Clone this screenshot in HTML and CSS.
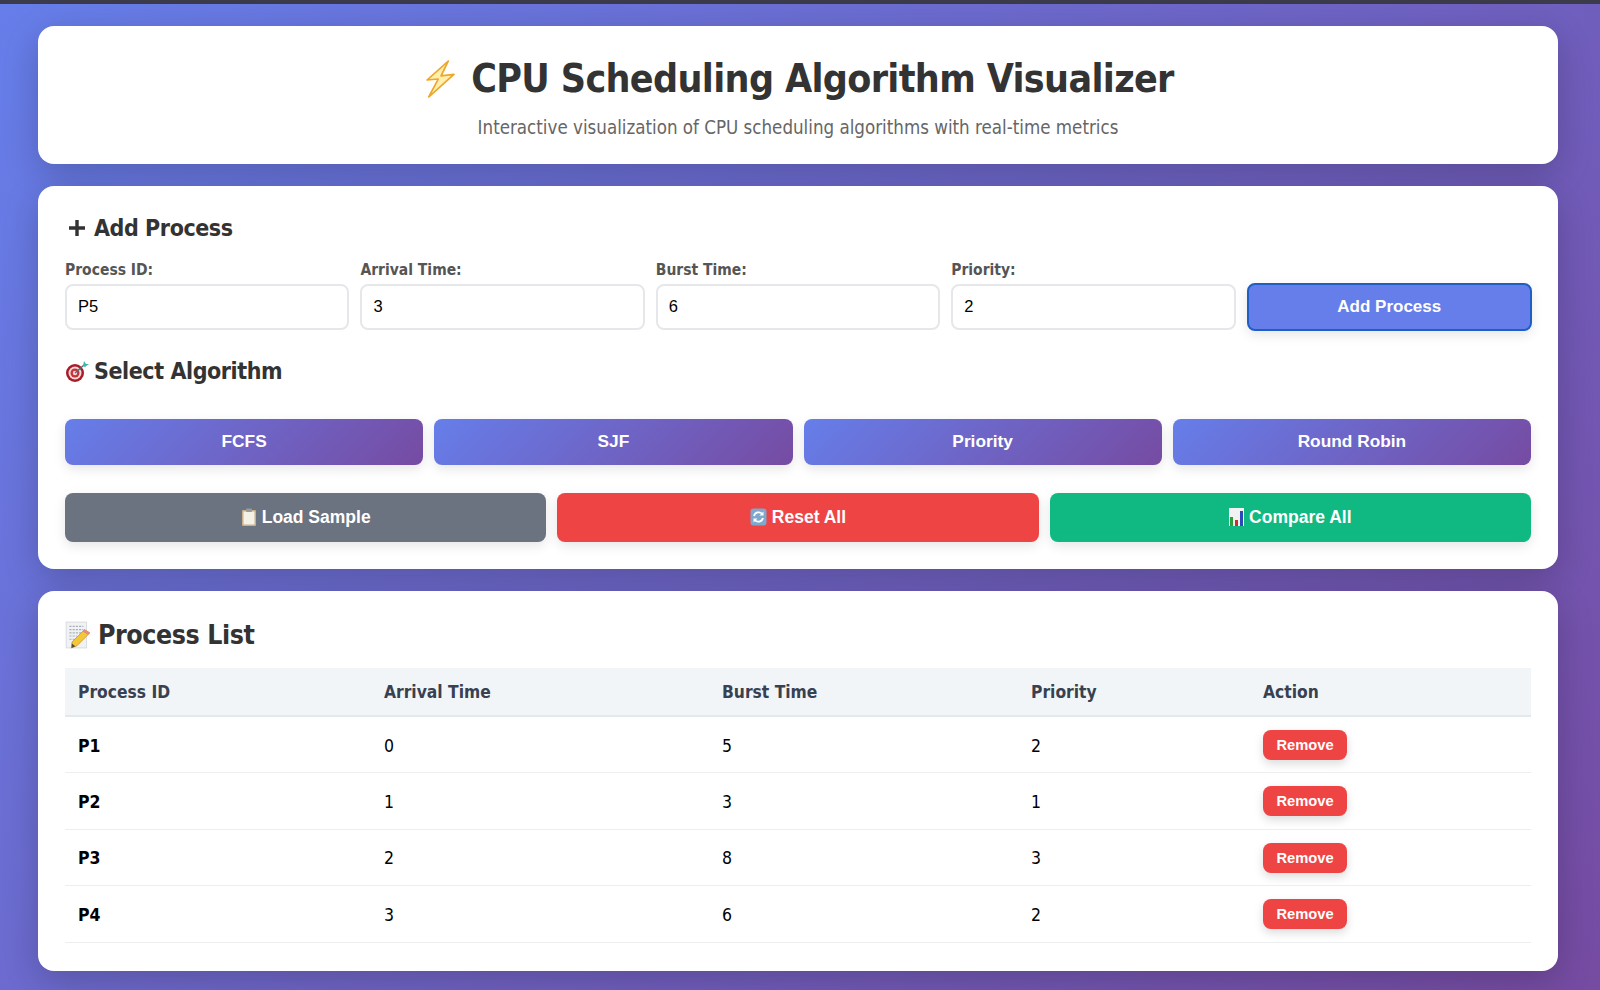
FILE: index.html
```html
<!DOCTYPE html>
<html lang="en">
<head>
  <meta charset="UTF-8">
  <meta name="viewport" content="width=device-width, initial-scale=1.0">
  <title>CPU Scheduling Algorithm Visualizer</title>
  <link rel="stylesheet" href="styles.css">
</head>
<body>

<div class="top-strip"></div>

<div class="container">
  <header class="card page-header">
    <h1>
      <svg class="bolt" width="29" height="38" viewBox="0 0 26 37" preserveAspectRatio="none">
        <path d="M20 1 L1 19.500 L11 18.500 L2.500 36 L25 14 L13.500 15.500 Z" fill="#fff0b0" stroke="#f0a62a" stroke-width="1.600" stroke-linejoin="round"/>
      </svg>
      <span>CPU Scheduling Algorithm Visualizer</span>
    </h1>
    <p>Interactive visualization of CPU scheduling algorithms with real-time metrics</p>
  </header>

  <section class="card controls">
    <h2 class="add-title">
      <svg width="18" height="18" viewBox="0 0 18 18"><path d="M9 1 V17 M1 9 H17" stroke="#333" stroke-width="3.400"/></svg>
      <span>Add Process</span>
    </h2>
    <div class="form-row">
      <div class="field">
        <label for="pid">Process ID:</label>
        <input type="text" id="pid" value="P5">
      </div>
      <div class="field">
        <label for="arrival">Arrival Time:</label>
        <input type="text" id="arrival" value="3">
      </div>
      <div class="field">
        <label for="burst">Burst Time:</label>
        <input type="text" id="burst" value="6">
      </div>
      <div class="field">
        <label for="priority">Priority:</label>
        <input type="text" id="priority" value="2">
      </div>
      <button class="add-btn">Add Process</button>
    </div>

    <h2 class="algo-title">
      <svg width="24" height="22" viewBox="0 0 24 22">
        <circle cx="10" cy="13" r="9" fill="#a81c28"/>
        <circle cx="10" cy="13" r="6.500" fill="#f3d9d6"/>
        <circle cx="10" cy="13" r="4.500" fill="#c9303a"/>
        <circle cx="10" cy="13" r="2.200" fill="#f3d9d6"/>
        <path d="M10 13 L19 5" stroke="#4b6f78" stroke-width="1.400"/>
        <path d="M18 6 L19 1 L21 4 L24 4 L20 7 Z" fill="#3fb6b0"/>
      </svg>
      <span>Select Algorithm</span>
    </h2>
    <div class="algo-row">
      <button class="algo-btn">FCFS</button>
      <button class="algo-btn">SJF</button>
      <button class="algo-btn">Priority</button>
      <button class="algo-btn">Round Robin</button>
    </div>

    <div class="action-row">
      <button class="action-btn gray">
        <svg width="16" height="18" viewBox="0 0 16 18">
          <rect x="1" y="2" width="14" height="16" rx="1" fill="#c9b08a"/>
          <rect x="2.500" y="3.500" width="11" height="13" fill="#f4f1e6"/>
          <rect x="5" y="0.500" width="6" height="3.500" rx="1" fill="#9a9a9a"/>
        </svg>
        Load Sample
      </button>
      <button class="action-btn red">
        <svg width="17" height="18" viewBox="0 0 17 18">
          <rect x="0.500" y="0.500" width="16" height="17" rx="3" fill="#7fa8cf"/>
          <path d="M4 8 A4.800 4.800 0 0 1 12.300 6 M13 10 A4.800 4.800 0 0 1 4.700 12" fill="none" stroke="#fff" stroke-width="1.800"/>
          <path d="M13.500 3.500 V7.500 H9.500 Z M3.500 14.500 V10.500 H7.500 Z" fill="#fff"/>
        </svg>
        Reset All
      </button>
      <button class="action-btn green">
        <svg width="15" height="18" viewBox="0 0 15 18">
          <rect width="15" height="18" fill="#f2f2f2"/>
          <rect x="1" y="9" width="3" height="9" fill="#2f9e3f"/>
          <rect x="6" y="12" width="3" height="6" fill="#c9302c"/>
          <rect x="11" y="3" width="3" height="15" fill="#2f48b8"/>
        </svg>
        Compare All
      </button>
    </div>
  </section>

  <section class="card process-list">
    <h2 class="list-title">
      <svg width="26" height="28" viewBox="0 0 24 26">
        <rect x="1" y="1" width="19" height="24" fill="#f1f2f4" stroke="#d5d8de" stroke-width="0.800"/>
        <path d="M4 5 H17 M4 8 H17 M4 11 H15 M4 14 H11 M4 17 H9" stroke="#a9afba" stroke-width="1" stroke-dasharray="2 1"/>
        <path d="M18 8 L23 11 L11 23 L6 25 L6.500 19.500 Z" fill="#f3c736" stroke="#c98f1c" stroke-width="0.700"/>
        <path d="M6 25 L6.300 21 L9.500 23.500 Z" fill="#5a4a33"/>
        <path d="M18 8 L23 11 L21.500 13 L16.500 10 Z" fill="#e58a8a"/>
      </svg>
      <span>Process List</span>
    </h2>
    <table>
      <thead>
        <tr>
          <th class="col-id">Process ID</th>
          <th class="col-arrival">Arrival Time</th>
          <th class="col-burst">Burst Time</th>
          <th class="col-priority">Priority</th>
          <th>Action</th>
        </tr>
      </thead>
      <tbody>
        <tr>
          <td><strong>P1</strong></td><td>0</td><td>5</td><td>2</td>
          <td><button class="remove-btn">Remove</button></td>
        </tr>
        <tr>
          <td><strong>P2</strong></td><td>1</td><td>3</td><td>1</td>
          <td><button class="remove-btn">Remove</button></td>
        </tr>
        <tr>
          <td><strong>P3</strong></td><td>2</td><td>8</td><td>3</td>
          <td><button class="remove-btn">Remove</button></td>
        </tr>
        <tr>
          <td><strong>P4</strong></td><td>3</td><td>6</td><td>2</td>
          <td><button class="remove-btn">Remove</button></td>
        </tr>
      </tbody>
    </table>
  </section>
</div>

</body>
</html>
```

FILE: styles.css
```css
* {
  box-sizing: border-box;
}

body {
  font-family: "DejaVu Sans Condensed", "DejaVu Sans", sans-serif;
  font-stretch: condensed;
  margin: 0;
  padding: 0;
  min-height: 990px;
  overflow: hidden;
  color: #333;
  background: linear-gradient(135deg, #667eea 0%, #764ba2 100%);
}

button {
  font-family: "Liberation Sans", Arial, sans-serif;
  font-weight: 700;
  color: #fff;
  border: none;
  cursor: pointer;
}

.top-strip {
  height: 4px;
  background-color: #3b3b4b;
}

.container {
  padding: 22px 42px 0 38px;
  display: flex;
  flex-direction: column;
  gap: 22px;
}

.card {
  background-color: #fff;
  border-radius: 16px;
  box-shadow: 0 10px 36px rgba(0, 0, 0, 0.2);
}

.page-header {
  height: 138px;
  padding-top: 26px;
  text-align: center;
}

.page-header h1 {
  margin: 0;
  padding-left: 4px;
  font-size: 39px;
  letter-spacing: -0.65px;
  line-height: 53px;
  color: #333;
  display: flex;
  align-items: center;
  justify-content: center;
  gap: 16px;
}

.page-header p {
  margin: 11px 0 0;
  font-size: 18.600px;
  line-height: 24px;
  color: #666;
}

.controls {
  height: 383px;
  padding: 27px 27px 0;
}

h2 {
  margin: 0;
  display: flex;
  align-items: center;
  color: #333;
}

.add-title,
.algo-title {
  font-size: 23px;
  letter-spacing: -0.43px;
  line-height: 30px;
}

.add-title {
  gap: 8px;
  padding-left: 3px;
}

.algo-title {
  gap: 5px;
  margin-top: 26px;
}

.form-row {
  display: grid;
  grid-template-columns: repeat(5, 1fr);
  gap: 11px;
  align-items: end;
  margin-top: 17px;
}

.field label {
  display: block;
  font-size: 15.500px;
  font-weight: 700;
  line-height: 20px;
  color: #555;
  margin-bottom: 3.500px;
}

.field input {
  width: 100%;
  height: 46px;
  padding: 0 11px;
  font-family: "Liberation Sans", Arial, sans-serif;
  font-size: 16.500px;
  color: #000;
  border: 2px solid #e5e7eb;
  border-radius: 8px;
}

.add-btn {
  height: 48px;
  font-size: 17px;
  background-color: #667eea;
  border: 2px solid #1f5fc4;
  border-radius: 8px;
  box-shadow: 0 4px 12px rgba(0, 0, 0, 0.1);
  margin: 0 -1px -1px 0;
}

.algo-row {
  display: grid;
  grid-template-columns: repeat(4, 1fr);
  gap: 11px;
  margin-top: 33px;
}

.algo-btn {
  height: 46px;
  font-size: 17.300px;
  border-radius: 8px;
  background: linear-gradient(135deg, #667eea 0%, #764ba2 100%);
  box-shadow: 0 4px 12px rgba(0, 0, 0, 0.1);
}

.action-row {
  display: grid;
  grid-template-columns: repeat(3, 1fr);
  gap: 11px;
  margin-top: 28px;
}

.action-btn {
  height: 49px;
  font-size: 17.500px;
  border-radius: 8px;
  box-shadow: 0 4px 12px rgba(0, 0, 0, 0.1);
  display: flex;
  align-items: center;
  justify-content: center;
  gap: 5px;
}

.gray {
  background-color: #6b7280;
}

.red {
  background-color: #ef4444;
}

.green {
  background-color: #10b981;
}

.process-list {
  height: 380px;
  padding: 26px 27px 0;
}

.list-title {
  font-size: 26.500px;
  letter-spacing: -0.43px;
  line-height: 36px;
  gap: 7px;
  margin-bottom: 15px;
}

table {
  width: 100%;
  border-collapse: collapse;
  table-layout: fixed;
}

.col-id {
  width: 306px;
}

.col-arrival {
  width: 338px;
}

.col-burst {
  width: 309px;
}

.col-priority {
  width: 232px;
}

th {
  height: 48px;
  padding: 0 13px;
  text-align: left;
  font-size: 17.300px;
  color: #374151;
  background-color: #f2f5f7;
  border-bottom: 2px solid #e2e8ec;
}

td {
  height: 56.500px;
  padding: 2px 13px 0;
  font-size: 17.500px;
  color: #000;
  border-bottom: 1px solid #eceef0;
}

.remove-btn {
  display: block;
  width: 84px;
  height: 30px;
  font-size: 14.700px;
  background-color: #ef4444;
  border-radius: 8px;
  box-shadow: 0 4px 10px rgba(0, 0, 0, 0.14);
  margin-top: -1px;
}
```
